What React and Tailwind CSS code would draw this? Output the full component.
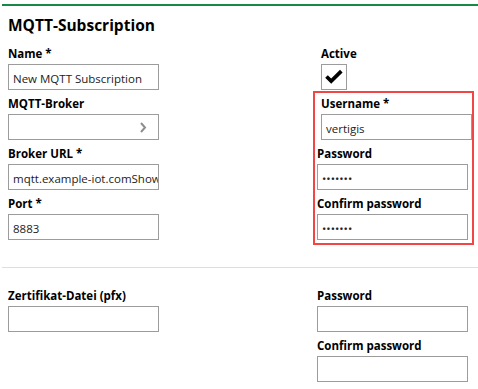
import * as React from "react";

function Label({ children }) {
  return (
    <div className="h-4 mb-[2px] text-[11.5px] leading-4 font-bold text-black whitespace-nowrap">
      {children}
    </div>
  );
}

function Field({ label, value, type = "text", chevron = false, className = "" }) {
  return (
    <div className={className}>
      <Label>{label}</Label>
      <div className="relative w-[151px] h-[26px] border border-[#9c9c9c] bg-white">
        <input
          type={type}
          readOnly
          value={value || ""}
          className="w-full h-full pl-[4px] pr-0 text-[11.5px] text-[#222] bg-transparent outline-none"
        />
        {chevron && (
          <svg
            className="absolute right-[11px] top-[5px]"
            width="8"
            height="14"
            viewBox="0 0 8 14"
          >
            <path d="M2 3 L6 7.5 L2 12" fill="none" stroke="#8e8e8e" strokeWidth="2" />
          </svg>
        )}
      </div>
    </div>
  );
}

export default function App() {
  return (
    <div className="w-[478px] h-[389px] bg-white pt-1 pl-[2px] font-['Open_Sans',sans-serif] overflow-hidden">
      <div className="border-t-2 border-[#1b8747]">
        <h1 className="mt-[9px] mb-[11px] pl-[6px] text-[15.5px] leading-5 font-bold text-black">
          MQTT-Subscription
        </h1>

        <div className="flex pl-[6px]">
          <div className="w-[151px] flex flex-col gap-[6px]">
            <Field label="Name *" value="New MQTT Subscription" />
            <Field label="MQTT-Broker" chevron />
            <Field label="Broker URL *" value="mqtt.example-iot.comShow" />
            <Field label="Port *" value="8883" />
          </div>

          <div className="ml-[154px] w-[161px]">
            <div className="pl-2 mb-[1px]">
              <Label>Active</Label>
              <div className="w-[26px] h-[26px] border border-[#9c9c9c] flex items-center justify-center">
                <svg width="20" height="16" viewBox="0 0 20 16">
                  <path
                    d="M1.2 8.8 L3.8 6.2 L7.2 9.4 L16 0.8 L18.6 3.4 L7.2 14.8 Z"
                    fill="#000"
                  />
                </svg>
              </div>
            </div>

            <div className="border-2 border-[#f24545] pt-[3px] pb-[3px] flex flex-col gap-[6px]">
              <Field label="Username *" value="vertigis" className="pl-[6px]" />
              <Field label="Password" value="1234567" type="password" className="pl-[2px]" />
              <Field label="Confirm password" value="1234567" type="password" className="pl-[2px]" />
            </div>
          </div>
        </div>

        <div className="mt-[22px] h-px bg-[#dedede]" />

        <div className="flex pl-[6px] mt-5">
          <div className="w-[151px]">
            <Field label="Zertifikat-Datei (pfx)" />
          </div>
          <div className="ml-[158px] flex flex-col gap-[6px]">
            <Field label="Password" />
            <Field label="Confirm password" />
          </div>
        </div>
      </div>
    </div>
  );
}
